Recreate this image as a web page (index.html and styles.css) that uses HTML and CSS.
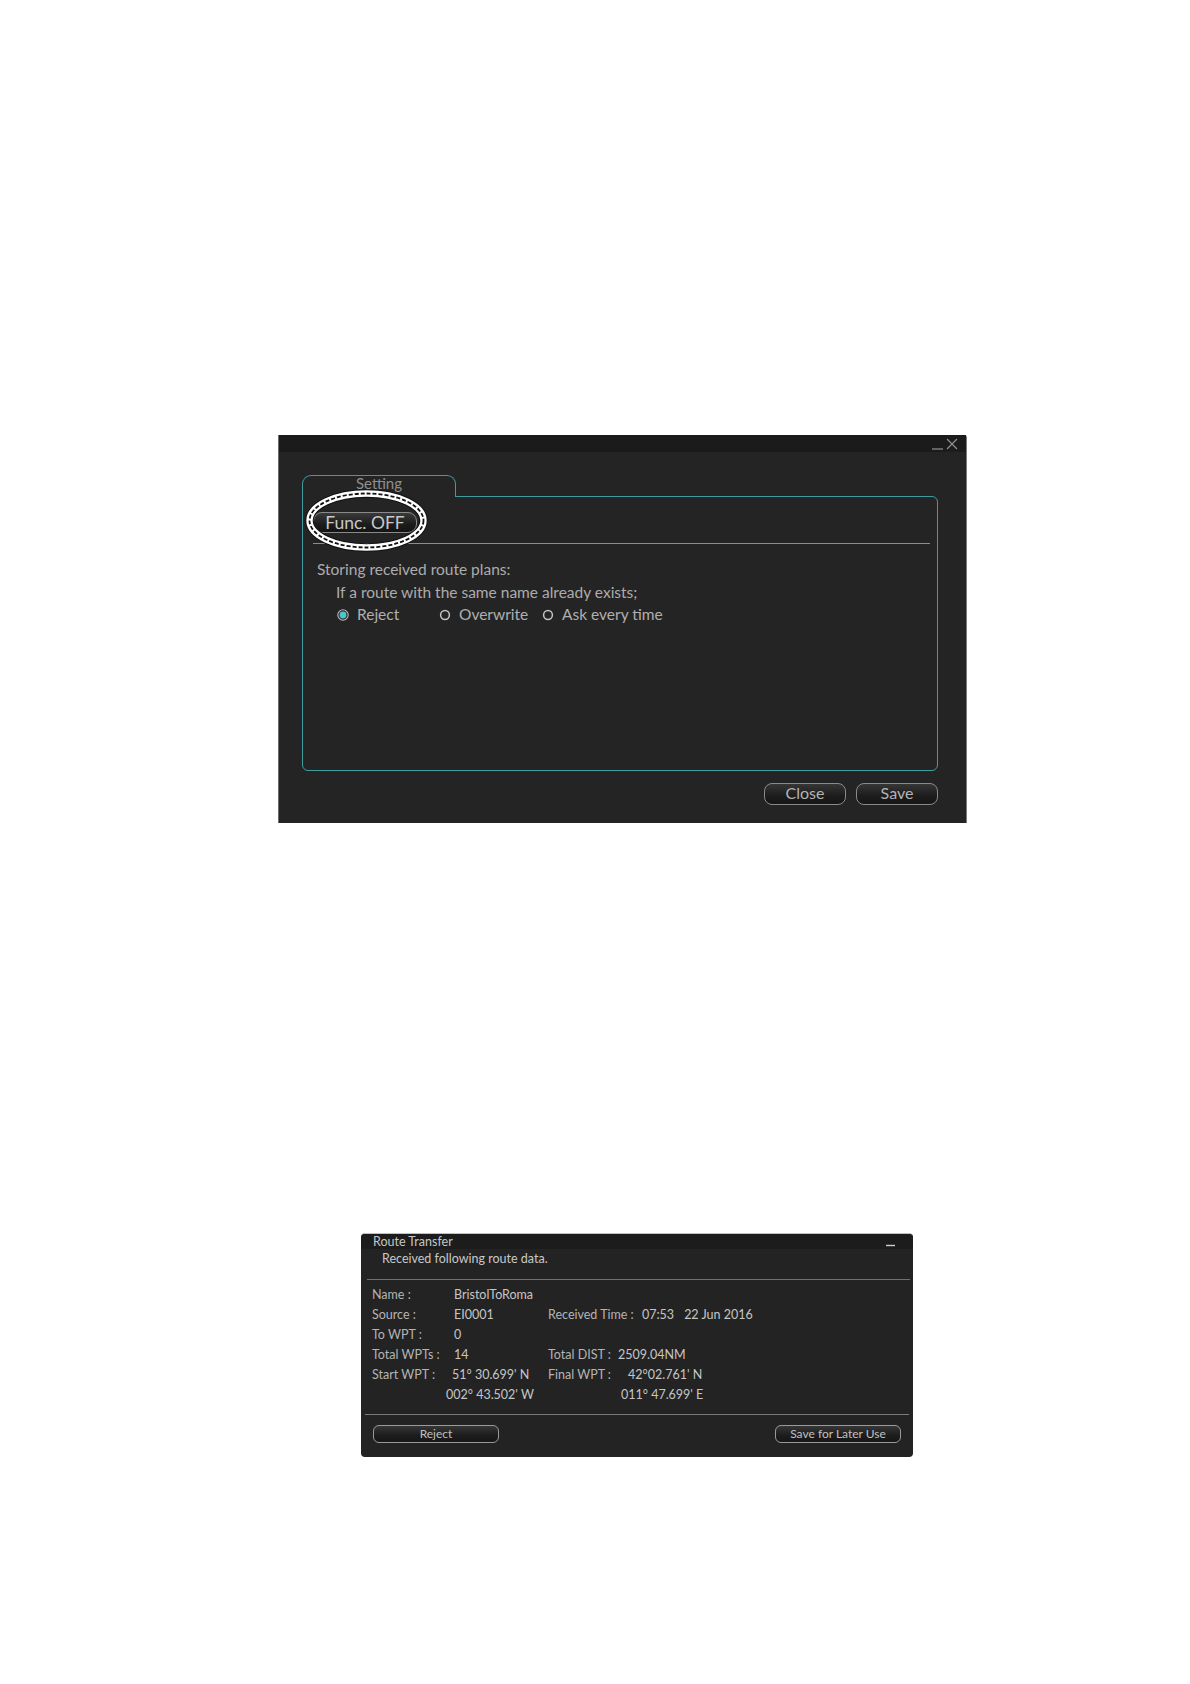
FILE: index.html
```html
<!DOCTYPE html>
<html lang="en">
<head>
<meta charset="utf-8">
<title>Route Transfer</title>
<link rel="stylesheet" href="styles.css">
</head>
<body>
<div class="page">

  <div class="dlg1">
    <div class="dlg1-title">
      <svg class="win-icons" width="26" height="12" viewBox="0 0 26 12">
        <line x1="0" y1="11" x2="11" y2="11" stroke="#8c8c8c" stroke-width="1.3"/>
        <line x1="15" y1="1" x2="25" y2="11" stroke="#8c8c8c" stroke-width="1.2"/>
        <line x1="25" y1="1" x2="15" y2="11" stroke="#8c8c8c" stroke-width="1.2"/>
      </svg>
    </div>
    <div class="dlg1-body">
      <div class="tab">Setting</div>
      <div class="panel">
        <svg class="mark" width="123" height="63" viewBox="0 0 123 63">
          <ellipse cx="61.5" cy="31.5" rx="57" ry="27" fill="none" stroke="#111" stroke-width="8.4"/>
          <ellipse cx="61.5" cy="31.5" rx="57" ry="27" fill="none" stroke="#fff" stroke-width="6.4"/>
          <ellipse cx="61.5" cy="31.5" rx="57" ry="27" fill="none" stroke="#111" stroke-width="1.8" stroke-dasharray="4 2"/>
        </svg>
        <button class="func-btn">Func. OFF</button>
        <div class="sep"></div>
        <p class="line1">Storing received route plans:</p>
        <p class="line2">If a route with the same name already exists;</p>
        <div class="radios">
          <div class="radio r1">
            <svg width="12" height="12" viewBox="0 0 12 12"><circle cx="6" cy="6" r="5.2" fill="#2c2c2c" stroke="#b8b8b8" stroke-width="1.1"/><circle cx="6" cy="6" r="3.4" fill="#4fc4cc"/></svg>
            <span>Reject</span>
          </div>
          <div class="radio r2">
            <svg width="12" height="12" viewBox="0 0 12 12"><circle cx="6" cy="6" r="4.4" fill="none" stroke="#c4c4c4" stroke-width="1.5"/></svg>
            <span>Overwrite</span>
          </div>
          <div class="radio">
            <svg width="12" height="12" viewBox="0 0 12 12"><circle cx="6" cy="6" r="4.4" fill="none" stroke="#c4c4c4" stroke-width="1.5"/></svg>
            <span>Ask every time</span>
          </div>
        </div>
      </div>
      <div class="dlg1-buttons">
        <button class="btn1">Close</button>
        <button class="btn1">Save</button>
      </div>
    </div>
  </div>

  <div class="dlg2">
    <div class="dlg2-title">
      <span>Route Transfer</span>
      <svg width="10" height="15" viewBox="0 0 10 15"><line x1="0" y1="11.5" x2="9" y2="11.5" stroke="#cfcfcf" stroke-width="1.4"/></svg>
    </div>
    <p class="msg">Received following route data.</p>
    <div class="sep2"></div>
    <div class="grid">
      <span class="k">Name :</span><span class="v">BristolToRoma</span><span></span>
      <span class="k">Source :</span><span class="v">EI0001</span><span><span class="k3 w94">Received Time :</span><span class="v">07:53</span><span class="v gap">22 Jun 2016</span></span>
      <span class="k">To WPT :</span><span class="v">0</span><span></span>
      <span class="k">Total WPTs :</span><span class="v">14</span><span><span class="k3 w70">Total DIST :</span><span class="v">2509.04NM</span></span>
      <span class="k">Start WPT :</span><span class="v lft">51° 30.699' N</span><span><span class="k3 w80">Final WPT :</span><span class="v">42°02.761' N</span></span>
      <span></span><span class="v lft2">002° 43.502' W</span><span><span class="k3 w73"></span><span class="v">011° 47.699' E</span></span>
    </div>
    <div class="sep3"></div>
    <div class="dlg2-buttons">
      <button class="btn2">Reject</button>
      <button class="btn2">Save for Later Use</button>
    </div>
  </div>

</div>
</body>
</html>
```

FILE: styles.css
```css
html, body {
  margin: 0;
  padding: 0;
  background: #ffffff;
}

body {
  font-family: "Lato", "Open Sans", sans-serif;
}

.page {
  display: flex;
  flex-direction: column;
  align-items: flex-start;
  padding-top: 435px;
  height: 1684px;
  box-sizing: border-box;
}

p {
  margin: 0;
}

button {
  font-family: inherit;
  padding: 0;
  margin: 0;
  cursor: default;
}

/* ---------- Dialog 1 : Setting ---------- */

.dlg1 {
  margin-left: 278px;
  width: 689px;
  box-sizing: border-box;
  background: #242424;
  border-left: 1px solid #6c6c6c;
  border-right: 1px solid #7a7a7a;
  border-top-right-radius: 3px;
}

.dlg1-title {
  height: 17px;
  background: #1b1b1b;
  display: flex;
  justify-content: flex-end;
  align-items: flex-end;
  padding-right: 8px;
}

.win-icons {
  display: block;
  margin-bottom: 2px;
}

.dlg1-body {
  padding: 23px 28px 18px 23px;
}

.tab {
  width: 154px;
  height: 22px;
  box-sizing: border-box;
  border: 1px solid #3f9da2;
  border-bottom: none;
  border-radius: 9px 9px 0 0;
  background: #242424;
  margin-bottom: -1px;
  position: relative;
  z-index: 1;
  text-align: center;
  color: #8e8e8e;
  font-size: 15px;
  line-height: 14px;
}

.panel {
  position: relative;
  height: 275px;
  box-sizing: border-box;
  border: 1px solid #3f9da2;
  border-radius: 0 6px 6px 6px;
  padding: 15px 7px 0 10px;
}

.mark {
  position: absolute;
  left: 2px;
  top: -8px;
  z-index: 2;
}

.func-btn {
  display: block;
  width: 104px;
  height: 21px;
  box-sizing: border-box;
  border: 1px solid #8a8a8a;
  border-radius: 9px;
  background: linear-gradient(#3a3a3a, #1c1c1c 60%, #141414);
  color: #c8c8c8;
  font-size: 17.5px;
  line-height: 19px;
  text-align: center;
}

.sep {
  height: 1px;
  background: #8c8c8c;
  margin-top: 10px;
}

.line1 {
  margin-top: 15px;
  margin-left: 4px;
  font-size: 15.5px;
  line-height: 21px;
  color: #acacac;
}

.line2 {
  margin-top: 2px;
  margin-left: 23px;
  font-size: 15.5px;
  line-height: 21px;
  color: #acacac;
}

.radios {
  display: flex;
  margin-top: 1px;
  padding-left: 24px;
  font-size: 15.5px;
  line-height: 21px;
  color: #b0b0b0;
}

.radio {
  display: flex;
  align-items: center;
  gap: 8px;
}

.radio svg {
  display: block;
  flex: none;
}

.r1 {
  width: 102px;
}

.r2 {
  width: 103px;
}

.dlg1-buttons {
  display: flex;
  justify-content: flex-end;
  gap: 10px;
  margin-top: 12px;
}

.btn1 {
  width: 82px;
  height: 22px;
  box-sizing: border-box;
  border: 1px solid #8a8a8a;
  border-radius: 8px;
  background: linear-gradient(#363636, #1c1c1c 60%, #161616);
  color: #b4b4b4;
  font-size: 16px;
  line-height: 18px;
  padding-bottom: 3px;
  text-align: center;
}

/* ---------- Dialog 2 : Route Transfer ---------- */

.dlg2 {
  margin-left: 361px;
  margin-top: 410px;
  width: 552px;
  box-sizing: border-box;
  background: #232323;
  border-top: 1px solid #b9c1cf;
  border-radius: 4px;
  color: #c4c4c4;
  font-size: 12.5px;
}

.dlg2-title {
  height: 15px;
  background: #1c1c1c;
  display: flex;
  justify-content: space-between;
  padding: 0 17px 0 12px;
  font-size: 12.5px;
  line-height: 15px;
  color: #c6c6c6;
  border-radius: 4px 4px 0 0;
}

.dlg2-title svg {
  display: block;
}

.msg {
  margin-top: 2px;
  padding-left: 21px;
  line-height: 16px;
  color: #c8c8c8;
}

.sep2 {
  height: 1px;
  background: #707070;
  margin: 12px 3px 0 6px;
}

.grid {
  display: grid;
  grid-template-columns: 82px 94px 1fr;
  grid-auto-rows: 20px;
  line-height: 20px;
  margin-top: 5px;
  padding-left: 11px;
  white-space: nowrap;
}

.k {
  color: #b4b4b4;
}

.k3 {
  display: inline-block;
  color: #b4b4b4;
}

.v {
  color: #c6c6c6;
}

.w94 { width: 94px; }
.w70 { width: 70px; }
.w80 { width: 80px; }
.w73 { width: 73px; }

.gap {
  margin-left: 10px;
}

.lft {
  margin-left: -2px;
}

.lft2 {
  margin-left: -8px;
}

.sep3 {
  height: 1px;
  background: #7a7a7a;
  margin: 9px 4px 0 4px;
}

.dlg2-buttons {
  display: flex;
  justify-content: space-between;
  padding: 10px 12px 14px 12px;
}

.btn2 {
  width: 126px;
  height: 18px;
  box-sizing: border-box;
  border: 1px solid #9a9a9a;
  border-radius: 6px;
  background: linear-gradient(#363636, #1c1c1c 60%, #161616);
  color: #c0c0c0;
  font-size: 12px;
  line-height: 14px;
  padding-bottom: 1px;
  text-align: center;
}
```
